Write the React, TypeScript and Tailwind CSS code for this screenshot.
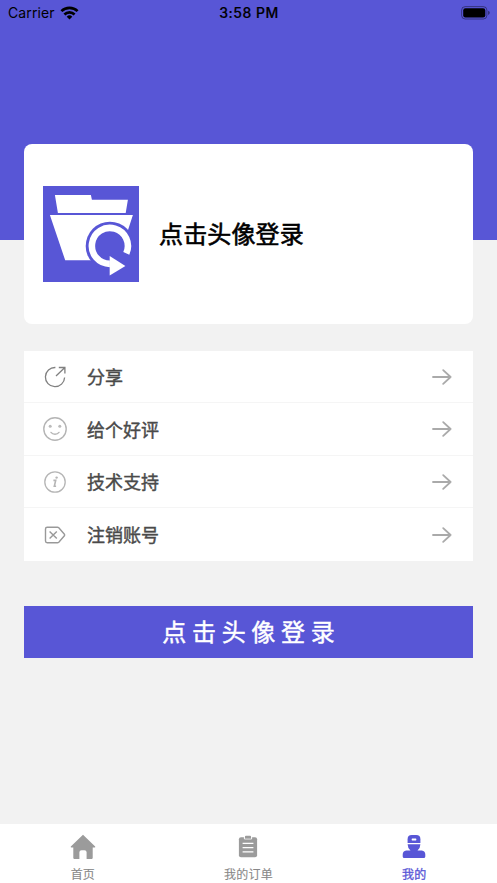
import React from "react";

const ShareIcon = () => (
  <svg width="24" height="24" viewBox="0 0 24 24" fill="none" stroke="#808080" strokeWidth="1.3">
    <path d="M12.4 2.5A9.6 9.6 0 1 0 21.6 12.4" />
    <path d="M13 11 21.6 2.8M15.8 2.5h6.1v6" />
  </svg>
);

const SmileIcon = () => (
  <svg width="24" height="24" viewBox="0 0 24 24" fill="none" stroke="#b5b5b5" strokeWidth="1.4">
    <circle cx="12" cy="12" r="11.2" />
    <path d="M8 15.4c1.8 2.5 6.2 2.5 8 0" strokeLinecap="round" />
    <circle cx="7.2" cy="9.3" r="1.5" fill="#bbb" stroke="none" />
    <circle cx="16.8" cy="9.3" r="1.5" fill="#bbb" stroke="none" />
  </svg>
);

const InfoIcon = () => (
  <svg width="24" height="24" viewBox="0 0 24 24" fill="none" stroke="#b5b5b5" strokeWidth="1.3">
    <circle cx="12" cy="12" r="10.2" />
    <path d="M10.4 10.4h2.3l-1.4 5.8h1.8" strokeWidth="1.6" />
    <circle cx="13.6" cy="7.6" r="1.2" fill="#b5b5b5" stroke="none" />
  </svg>
);

const CancelIcon = () => (
  <svg width="24" height="24" viewBox="0 0 24 24" fill="none" stroke="#999" strokeWidth="1.4">
    <path d="M4.2 4.2h10.2q.8 0 1.4.6l5.6 6.4q.6.8 0 1.6l-5.6 6.4q-.6.6-1.4.6H4.2q-1.7 0-1.7-1.7V5.9q0-1.7 1.7-1.7Z" />
    <path d="m6.6 8.4 7.2 7.2m0-7.2-7.2 7.2" />
  </svg>
);

const ArrowIcon = () => (
  <svg width="20" height="16" viewBox="0 0 20 16" fill="none" stroke="#aaa" strokeWidth="1.8" strokeLinecap="round" strokeLinejoin="round">
    <path d="M1 8h17.6M11.2 1.1 18.6 8l-7.4 6.9" />
  </svg>
);

const HomeIcon = () => (
  <svg width="26" height="26" viewBox="0 0 26 26" fill="currentColor">
    <path d="M13 .8.8 12.6q-.4.9.6.9h1.9v10.6q0 .8.8.8h5.3v-6.6q0-2.1 2.1-2.1h3q2.1 0 2.1 2.1v6.6h5.3q.8 0 .8-.8V13.5h1.9q1 0 .6-.9Z" />
  </svg>
);

const OrdersIcon = () => (
  <svg width="26" height="26" viewBox="0 0 26 26">
    <path fill="currentColor" d="M6 3.2h14q2.1 0 2.1 2.1v15.9q0 2.1-2.1 2.1H6q-2.1 0-2.1-2.1V5.3Q3.9 3.2 6 3.2Z" />
    <path d="M9.4 2.8v2.1h7.2V2.8" fill="none" stroke="#fff" strokeWidth="1" />
    <path fill="currentColor" d="M10 2.6q0-.9.9-.9h4.2q.9 0 .9.9v1.8h-6Z" />
    <path d="M7.6 9.3h10.8M7.6 13.6h10.8M7.6 17.8h10.8" fill="none" stroke="#fff" strokeWidth="1.3" />
  </svg>
);

const MineIcon = () => (
  <svg width="26" height="26" viewBox="0 0 26 26" fill="currentColor">
    <path d="M6.6 9.1V5.2Q6.6 1.1 10.7 1.1h4.6q4.1 0 4.1 4.1v3.9Z" />
    <path d="M6.6 10.3h12.8q0 3.6-2.9 6.2h4.3q3.5.5 3.5 4v1.9q0 1.6-1.6 1.6H3.3q-1.6 0-1.6-1.6v-1.9q0-3.5 3.5-4h4.3q-2.9-2.6-2.9-6.2Z" />
    <rect x="10.7" y="4.5" width="4.6" height="2" rx=".4" fill="#fff" />
  </svg>
);

const Logo = () => (
  <svg width="96" height="96" viewBox="0 0 96 96" className="ml-[19.4px] bg-[#5856d6]">
    <path fill="#fff" d="M11.9 9h36l1 4.7h36L82.7 27H14.9ZM6.9 29h83L75.2 74.3H22.2Z" />
    <circle cx="66.9" cy="59.9" r="24.2" fill="#5856d6" />
    <path d="M83.3 67.3A18 18 0 1 0 66.9 77.9" fill="none" stroke="#fff" strokeWidth="6.6" />
    <path fill="#fff" d="m66.7 70 15.7 10-15.7 9.5Z" />
  </svg>
);

const menuList = [
  { icon: ShareIcon, title: "分享" },
  { icon: SmileIcon, title: "给个好评" },
  { icon: InfoIcon, title: "技术支持" },
  { icon: CancelIcon, title: "注销账号" },
];

const tabList = [
  { icon: HomeIcon, title: "首页", active: false },
  { icon: OrdersIcon, title: "我的订单", active: false },
  { icon: MineIcon, title: "我的", active: true },
];

const StatusBar = () => (
  <div className="grid h-[26px] grid-cols-3 items-center pl-2 pr-[7px] font-['Inter','Liberation_Sans',sans-serif] text-sm text-black">
    <div className="flex items-center gap-[5px]">
      <span className="tracking-[0.1px]">Carrier</span>
      <svg width="19" height="14" viewBox="0 0 19 14" fill="none" stroke="#000" strokeWidth="2.6">
        <path d="M1.4 5.2a11.5 11.5 0 0 1 16.2 0M4.4 8.5a7.2 7.2 0 0 1 10.2 0" />
        <path d="m9.5 13.5-2.8-2.8a4 4 0 0 1 5.6 0Z" fill="#000" stroke="none" />
      </svg>
    </div>
    <span className="text-center font-medium tracking-[0.5px] [-webkit-text-stroke:0.2px_black]">3:58 PM</span>
    <svg width="29" height="14" viewBox="0 0 29 14" className="justify-self-end">
      <rect x=".6" y=".6" width="25.3" height="12.4" rx="3.6" fill="none" stroke="#000" strokeOpacity=".4" />
      <rect x="2.2" y="2.2" width="22.1" height="9.2" rx="2.2" />
      <path d="M27.2 4.7q1.5.5 1.5 2.1t-1.5 2.1Z" opacity=".5" />
    </svg>
  </div>
);

export default function App() {
  return (
    <div className="flex h-[883px] w-[497px] flex-col overflow-hidden bg-[#f2f2f2] font-['Noto_Sans_CJK_SC',sans-serif]">
      <header className="h-60 shrink-0 bg-[#5856d6]">
        <StatusBar />
      </header>

      <main className="-mt-24 flex-1 px-6">
        <section className="flex h-[180px] w-[449px] items-center gap-[19.6px] rounded-lg bg-white">
          <Logo />
          <h1 className="pb-[3px] text-2xl font-normal tracking-[0.15px] text-black [-webkit-text-stroke:0.6px_black]">
            点击头像登录
          </h1>
        </section>

        <ul className="mt-[26.5px] w-[449px] divide-y divide-[#f5f5f5] bg-white">
          {menuList.map((item) => (
            <li key={item.title} className="flex h-[52.6px] items-center pl-[19px] pr-[21px] pt-px">
              <item.icon />
              <span className="ml-5 flex-1 pb-[1.6px] text-lg font-normal text-[#4a4a4a] [-webkit-text-stroke:0.4px_#4a4a4a]">
                {item.title}
              </span>
              <ArrowIcon />
            </li>
          ))}
        </ul>

        <button className="mt-[45px] flex h-[52.5px] w-[449px] items-center justify-center bg-[#5856d6] pb-[3px] pl-[5.7px] text-2xl font-normal tracking-[5.7px] text-white [-webkit-text-stroke:0.45px_white]">
          点击头像登录
        </button>
      </main>

      <nav className="grid h-[59px] shrink-0 grid-cols-3 bg-white">
        {tabList.map((tab) => (
          <div
            key={tab.title}
            className={`flex flex-col items-center pt-[10px] ${tab.active ? "text-[#5856d6]" : "text-[#9b9b9b]"}`}
          >
            <tab.icon />
            <span
              className={`mt-1 text-xs leading-5 tracking-[0.2px] ${
                tab.active ? "[-webkit-text-stroke:0.3px_#5856d6]" : "text-[#888] [-webkit-text-stroke:0.1px_#888]"
              }`}
            >
              {tab.title}
            </span>
          </div>
        ))}
      </nav>
    </div>
  );
}
